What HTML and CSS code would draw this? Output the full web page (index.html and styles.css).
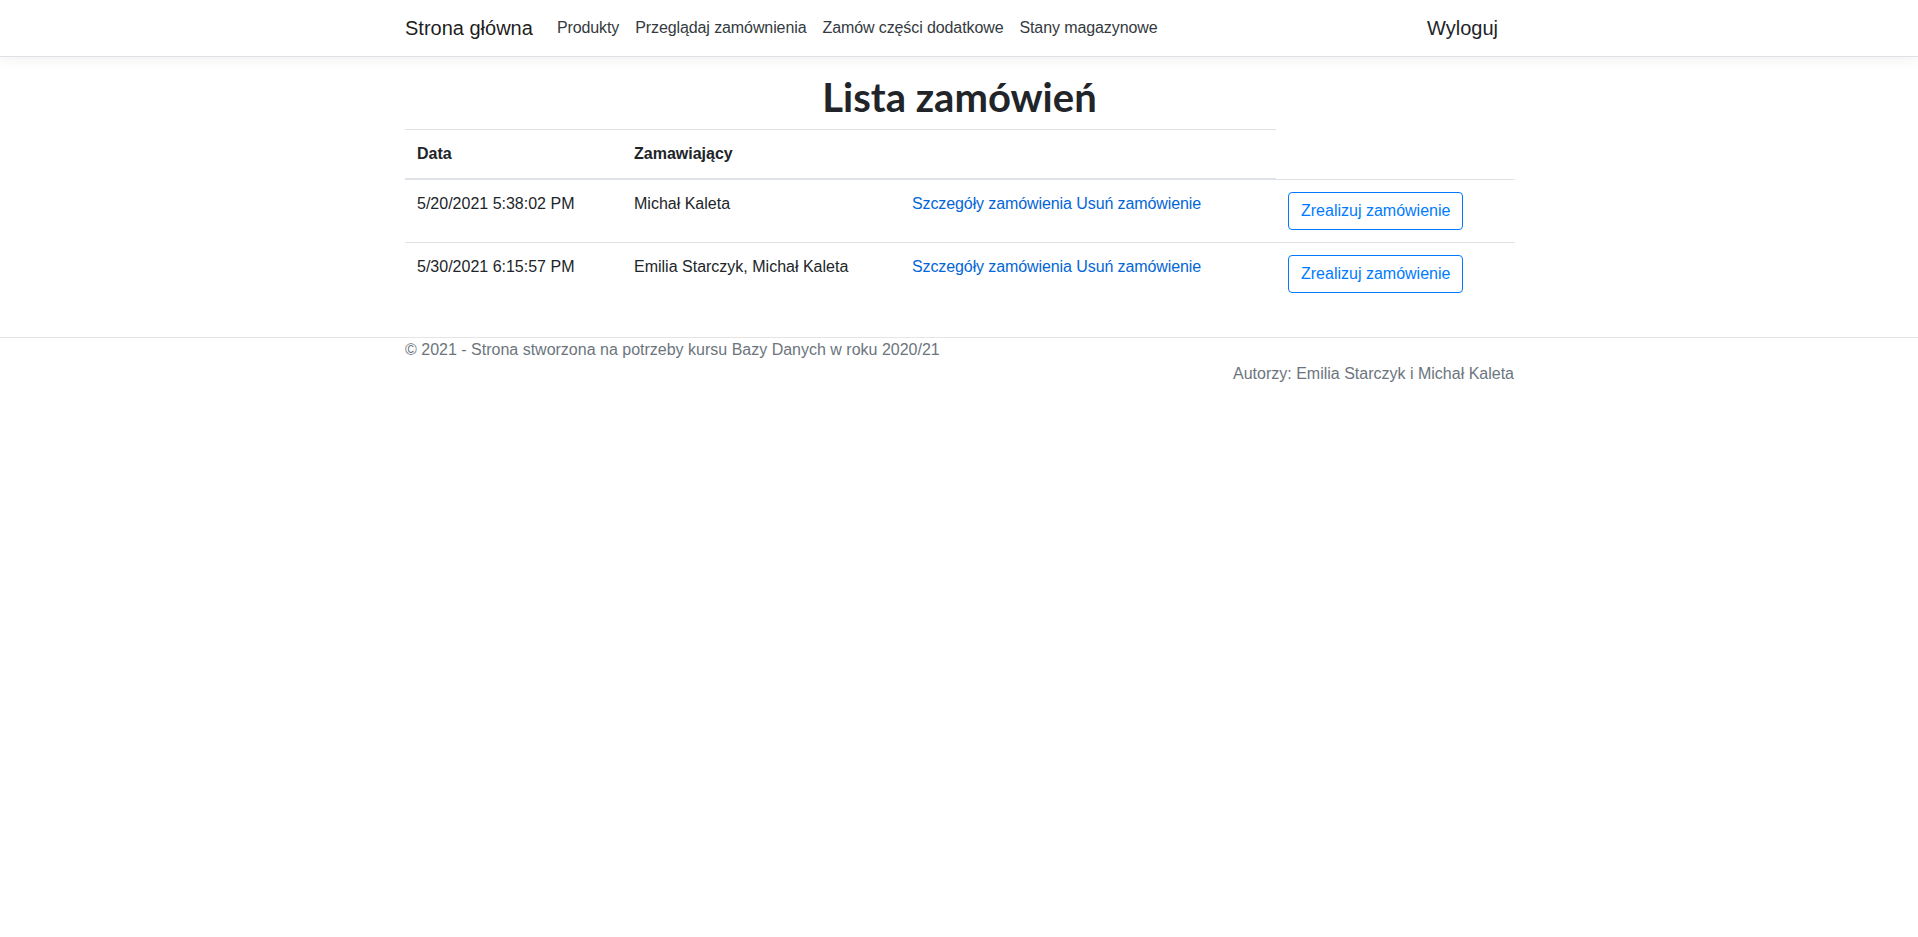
FILE: index.html
```html
<!DOCTYPE html>
<html lang="pl">
<head>
<meta charset="utf-8">
<title>Lista zamówień</title>
<link rel="stylesheet" href="styles.css">
</head>
<body>
<header class="navbar">
  <div class="container nav-inner">
    <a class="brand" href="#">Strona główna</a>
    <ul class="nav">
      <li><a class="nav-link" href="#">Produkty</a></li>
      <li><a class="nav-link" href="#">Przeglądaj zamównienia</a></li>
      <li><a class="nav-link" href="#">Zamów części dodatkowe</a></li>
      <li><a class="nav-link" href="#">Stany magazynowe</a></li>
    </ul>
    <a class="logout" href="#">Wyloguj</a>
  </div>
</header>

<main class="container main">
  <h1 class="title">Lista zamówień</h1>
  <table class="table">
    <colgroup>
      <col class="c1"><col class="c2"><col class="c3"><col class="c4">
    </colgroup>
    <thead>
      <tr>
        <th>Data</th>
        <th>Zamawiający</th>
        <th></th>
      </tr>
    </thead>
    <tbody>
      <tr>
        <td>5/20/2021 5:38:02 PM</td>
        <td>Michał Kaleta</td>
        <td><a class="link" href="#">Szczegóły zamówienia</a> <a class="link" href="#">Usuń zamówienie</a></td>
        <td><button class="btn-outline" type="button">Zrealizuj zamówienie</button></td>
      </tr>
      <tr>
        <td>5/30/2021 6:15:57 PM</td>
        <td>Emilia Starczyk, Michał Kaleta</td>
        <td><a class="link" href="#">Szczegóły zamówienia</a> <a class="link" href="#">Usuń zamówienie</a></td>
        <td><button class="btn-outline" type="button">Zrealizuj zamówienie</button></td>
      </tr>
    </tbody>
  </table>
</main>

<footer class="footer">
  <div class="container">
    <div>&copy; 2021 - Strona stworzona na potrzeby kursu Bazy Danych w roku 2020/21</div>
    <div class="authors">Autorzy: Emilia Starczyk i Michał Kaleta</div>
  </div>
</footer>
</body>
</html>
```

FILE: styles.css
```css
* { box-sizing: border-box; }

html, body {
  margin: 0;
  padding: 0;
}

body {
  font-family: "Liberation Sans", Arial, sans-serif;
  font-size: 16px;
  line-height: 1.5;
  color: #212529;
  background: #fff;
}

a { text-decoration: none; }

.container {
  width: 1140px;
  margin: 0 auto;
  padding: 0 15px 0 16px;
}

/* navbar */
.navbar {
  background: #fff;
  border-bottom: 1px solid #dee2e6;
  box-shadow: 0 4px 12px rgba(0, 0, 0, 0.05);
  padding: 8px 0;
  margin-bottom: 16px;
}

.nav-inner {
  display: flex;
  align-items: center;
}

.brand {
  font-size: 20px;
  line-height: 30px;
  padding: 5px 0;
  margin-right: 16px;
  color: rgba(0, 0, 0, 0.9);
  white-space: nowrap;
}

.nav {
  display: flex;
  list-style: none;
  margin: 0;
  padding: 0;
}

.nav-link {
  display: block;
  padding: 8px;
  color: #343a40;
  line-height: 24px;
  letter-spacing: -0.1px;
}

.logout {
  margin-left: auto;
  font-size: 20px;
  line-height: 30px;
  padding: 5px 16px 5px 8px;
  color: #212529;
}

/* main */
.main {
  padding-bottom: 16px;
}

.title {
  margin: 0 0 8px;
  font-family: Lato, "Liberation Sans", sans-serif;
  font-size: 40px;
  font-weight: 700;
  line-height: 1.2;
  text-align: center;
}

.table {
  width: 100%;
  table-layout: fixed;
  border-collapse: collapse;
  margin-bottom: 16px;
  color: #212529;
}

.c1 { width: 217px; }
.c2 { width: 278px; }
.c3 { width: 376px; }
.c4 { width: 239px; }

.table th,
.table td {
  padding: 12px;
  vertical-align: top;
  border-top: 1px solid #dee2e6;
  text-align: left;
}

.table th {
  font-weight: bold;
}

.table thead th {
  vertical-align: bottom;
  border-bottom: 2px solid #dee2e6;
}

.link {
  color: #0366d6;
  letter-spacing: -0.1px;
}

.btn-outline {
  font-family: inherit;
  font-size: 16px;
  line-height: 24px;
  padding: 6px 12px;
  color: #007bff;
  background: transparent;
  border: 1px solid #007bff;
  border-radius: 4px;
  cursor: pointer;
}

/* footer */
.footer {
  border-top: 1px solid #e5e5e5;
  color: #6c757d;
  white-space: nowrap;
}

.authors {
  text-align: right;
}
```
